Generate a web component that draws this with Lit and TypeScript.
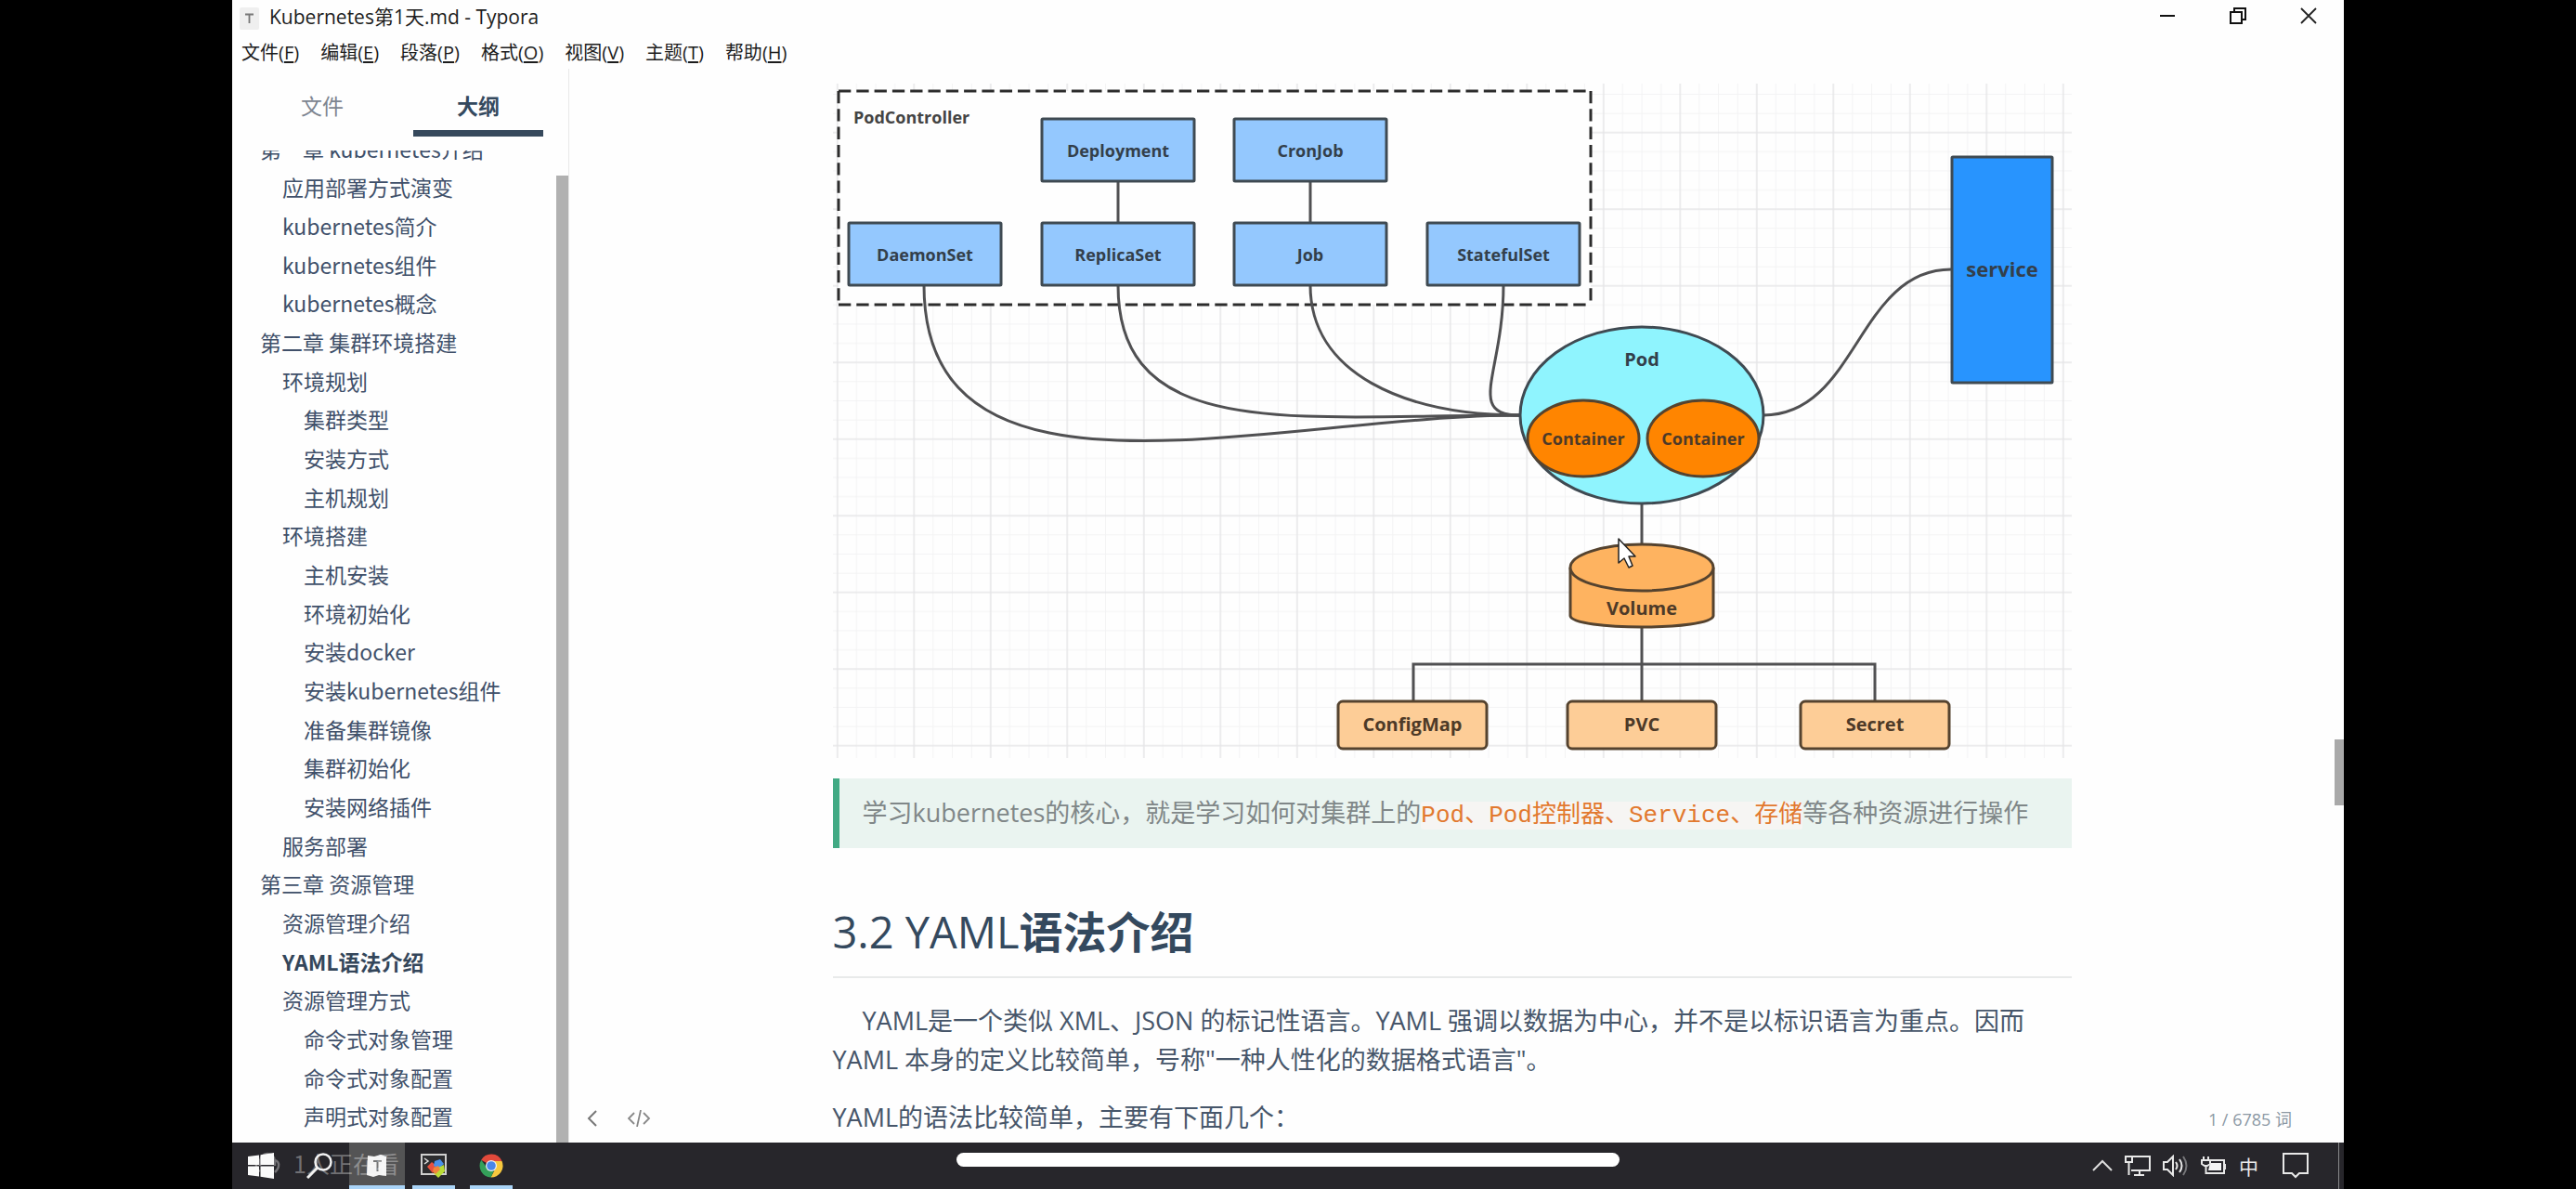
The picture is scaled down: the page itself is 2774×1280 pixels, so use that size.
import { LitElement, html, svg, css } from "lit";
import { customElement, state } from "lit/decorators.js";
import { classMap } from "lit/directives/class-map.js";

interface OutlineEntry {
  text: string;
  level: number;
}

interface Box {
  label: string;
  x: number;
  y: number;
}

const MENUS: [string, string][] = [
  ["文件", "F"],
  ["编辑", "E"],
  ["段落", "P"],
  ["格式", "O"],
  ["视图", "V"],
  ["主题", "T"],
  ["帮助", "H"],
];

const OUTLINE: OutlineEntry[] = [
  { text: "第一章 kubernetes介绍", level: 1 },
  { text: "应用部署方式演变", level: 2 },
  { text: "kubernetes简介", level: 2 },
  { text: "kubernetes组件", level: 2 },
  { text: "kubernetes概念", level: 2 },
  { text: "第二章 集群环境搭建", level: 1 },
  { text: "环境规划", level: 2 },
  { text: "集群类型", level: 3 },
  { text: "安装方式", level: 3 },
  { text: "主机规划", level: 3 },
  { text: "环境搭建", level: 2 },
  { text: "主机安装", level: 3 },
  { text: "环境初始化", level: 3 },
  { text: "安装docker", level: 3 },
  { text: "安装kubernetes组件", level: 3 },
  { text: "准备集群镜像", level: 3 },
  { text: "集群初始化", level: 3 },
  { text: "安装网络插件", level: 3 },
  { text: "服务部署", level: 2 },
  { text: "第三章 资源管理", level: 1 },
  { text: "资源管理介绍", level: 2 },
  { text: "YAML语法介绍", level: 2 },
  { text: "资源管理方式", level: 2 },
  { text: "命令式对象管理", level: 3 },
  { text: "命令式对象配置", level: 3 },
  { text: "声明式对象配置", level: 3 },
];

const CONTROLLERS: Box[] = [
  { label: "Deployment", x: 1122, y: 128 },
  { label: "CronJob", x: 1329, y: 128 },
  { label: "DaemonSet", x: 914, y: 240 },
  { label: "ReplicaSet", x: 1122, y: 240 },
  { label: "Job", x: 1329, y: 240 },
  { label: "StatefulSet", x: 1537, y: 240 },
];

const STORAGE: Box[] = [
  { label: "ConfigMap", x: 1441, y: 755 },
  { label: "PVC", x: 1688, y: 755 },
  { label: "Secret", x: 1939, y: 755 },
];

@customElement("title-bar")
class TitleBar extends LitElement {
  static styles = css`
    :host {
      display: block;
      font-family: "Open Sans", "Noto Sans CJK SC", sans-serif;
      color: #1c1c1c;
    }
    .title {
      display: flex;
      align-items: center;
      height: 40px;
      padding-left: 8px;
      gap: 11px;
      font-size: 21px;
    }
    .logo {
      width: 21px;
      height: 24px;
    }
    .name {
      flex: 1;
      line-height: 36px;
      padding-bottom: 4px;
    }
    .controls {
      align-self: flex-start;
      display: flex;
      height: 34px;
    }
    .control {
      width: 76px;
      padding: 0;
      border: 0;
      background: none;
      display: grid;
      place-items: center;
    }
    .menu {
      display: flex;
      gap: 23px;
      height: 34px;
      padding-left: 10px;
    }
    .menu-item {
      font: inherit;
      font-size: 20px;
      line-height: 34px;
      padding: 0;
      border: 0;
      background: none;
      color: inherit;
    }
    .key {
      text-underline-offset: 2px;
    }
  `;

  render() {
    return html`
      <div class="title">
        <svg class="logo" viewBox="0 0 21 24" aria-hidden="true">
          <rect width="21" height="24" rx="2" fill="#efefef" />
          <path d="M6 7.500h9M10.500 7.500V17" stroke="#777" stroke-width="1.800" fill="none" />
        </svg>
        <span class="name">Kubernetes第1天.md - Typora</span>
        <div class="controls">
          <button class="control" aria-label="最小化">
            <svg width="18" height="18" viewBox="0 0 18 18"><path d="M1 9h16" stroke="#111" stroke-width="2" /></svg>
          </button>
          <button class="control" aria-label="还原">
            <svg width="18" height="18" viewBox="0 0 18 18" fill="none" stroke="#111" stroke-width="2">
              <path d="M1 5h12v12H1zM5 5V1h12v12h-4" />
            </svg>
          </button>
          <button class="control" aria-label="关闭">
            <svg width="18" height="18" viewBox="0 0 18 18"><path d="M1 1l16 16M17 1L1 17" stroke="#222" stroke-width="1.800" /></svg>
          </button>
        </div>
      </div>
      <nav class="menu">
        ${MENUS.map(([name, key]) => html`<button class="menu-item">${name}(<u class="key">${key}</u>)</button>`)}
      </nav>
    `;
  }
}

@customElement("outline-panel")
class OutlinePanel extends LitElement {
  @state() private current = "YAML语法介绍";

  static styles = css`
    :host {
      display: flex;
      flex-direction: column;
      box-sizing: border-box;
      min-height: 0;
      border-right: 1px solid #e8e8e8;
      font-family: "Noto Sans CJK SC", sans-serif;
      color: #40506a;
    }
    .tabs {
      display: grid;
      grid-template-columns: 1fr 1fr;
      gap: 28px;
      padding: 0 27px;
      margin-bottom: 15px;
    }
    .tab {
      height: 73px;
      padding: 12px 0 0;
      border: 0;
      border-bottom: 7px solid transparent;
      background: none;
      font: inherit;
      font-size: 23px;
      line-height: 42px;
      color: #7d8590;
    }
    .tab.active {
      border-color: #36495c;
      color: #34495e;
      font-weight: 700;
    }
    .body {
      flex: 1;
      min-height: 0;
      display: flex;
      overflow: hidden;
    }
    .list {
      flex: 1;
      margin: -23px 0 0;
      padding: 0 0 8px;
      list-style: none;
      display: grid;
      grid-auto-rows: 1fr;
      font-size: 23px;
    }
    .row {
      display: flex;
      align-items: center;
      min-height: 0;
      line-height: 32px;
    }
    .level-1 {
      padding-left: 30px;
    }
    .level-2 {
      padding-left: 54px;
    }
    .level-3 {
      padding-left: 77px;
    }
    .link {
      color: inherit;
      text-decoration: none;
      white-space: nowrap;
    }
    .link.current {
      font-weight: 700;
      color: #34465a;
    }
    .track {
      width: 13px;
      padding-top: 27px;
      display: flex;
    }
    .thumb {
      flex: 1;
      background: #b1b1b1;
    }
  `;

  render() {
    return html`
      <div class="tabs" role="tablist">
        <button class="tab" role="tab">文件</button>
        <button class="tab active" role="tab" aria-selected="true">大纲</button>
      </div>
      <div class="body">
        <ul class="list">
          ${OUTLINE.map(
            (e) => html`<li class="row level-${e.level}">
              <a
                class=${classMap({ link: true, current: e.text === this.current })}
                href="#outline"
                @click=${() => (this.current = e.text)}
                >${e.text}</a
              >
            </li>`
          )}
        </ul>
        <div class="track"><div class="thumb"></div></div>
      </div>
    `;
  }
}

@customElement("pod-diagram")
class PodDiagram extends LitElement {
  static styles = css`
    :host {
      display: block;
    }
    .canvas {
      display: block;
      width: 100%;
      height: auto;
      font-family: "Open Sans", sans-serif;
      font-weight: 700;
      font-size: 18px;
    }
    .label {
      fill: #333f4b;
      text-anchor: middle;
    }
    .warm {
      fill: #4d3a28;
    }
    .large {
      font-size: 22px;
    }
    .medium {
      font-size: 20px;
    }
    .start {
      text-anchor: start;
      fill: #444;
    }
    .wire {
      fill: none;
      stroke: #505052;
      stroke-width: 3;
    }
    .shape {
      stroke: #3f4a52;
      stroke-width: 3;
    }
    .brown {
      stroke: #55432f;
    }
    .minor {
      fill: none;
      stroke: #f3f3f4;
      stroke-width: 1;
    }
    .major {
      fill: none;
      stroke: #e6e6e8;
      stroke-width: 1.500;
    }
  `;

  render() {
    return html`
      <svg class="canvas" viewBox="897 85 1334 733" role="img" aria-label="Kubernetes 资源关系图">
        <defs>
          <pattern id="grid" x="901.800" y="142.700" width="82.500" height="82.500" patternUnits="userSpaceOnUse">
            <path class="minor" d="M20.600 0V82.500M41.200 0V82.500M61.900 0V82.500M0 20.600H82.500M0 41.200H82.500M0 61.900H82.500" />
            <path class="major" d="M0 0H82.500M0 0V82.500M82.500 0V82.500M0 82.500H82.500" />
          </pattern>
        </defs>
        <rect x="897" y="90" width="1334" height="726" fill="url(#grid)" />
        <rect x="903" y="98" width="810" height="230" fill="#fefefe" />
        <path
          d="M903 98H1713M903 328H1713M903 98V328M1713 98V328"
          fill="none"
          stroke="#2c2c2c"
          stroke-width="3"
          stroke-dasharray="13.300 6"
        />
        <text class="label start" x="919" y="133">PodController</text>

        <path class="wire" d="M1204 195V240M1411 195V240M1768 541V586" />
        <path class="wire" d="M995 307C995 567 1369 447 1638 447" />
        <path class="wire" d="M1204 307C1204 477 1394 447 1638 447" />
        <path class="wire" d="M1411 307C1411 402 1512 447 1638 447" />
        <path class="wire" d="M1619 307C1619 403 1577 447 1638 447" />
        <path class="wire" d="M1899 447C2000 447 2000 290 2101 290" />
        <path class="wire" d="M1768 675V755M1522 755V715H2019V755" />

        ${CONTROLLERS.map(
          (b) => svg`
            <rect class="shape" x=${b.x} y=${b.y} width="164" height="67" rx="1" fill="#94c8fe" />
            <text class="label" x=${b.x + 82} y=${b.y + 41}>${b.label}</text>`
        )}

        <ellipse class="shape" cx="1768" cy="447" rx="131" ry="95" fill="#8ff4fe" />
        <text class="label medium" x="1768" y="394">Pod</text>
        ${[1705, 1834].map(
          (cx) => svg`
            <ellipse class="shape brown" cx=${cx} cy="472" rx="60" ry="41" fill="#ff8500" />
            <text class="label warm" x=${cx} y="479">Container</text>`
        )}

        <rect class="shape" x="2102" y="169" width="108" height="243" rx="1" fill="#2894fe" />
        <text class="label large" x="2156" y="298">service</text>

        <path class="shape brown" d="M1691 611V663C1694 679 1842 679 1845 663V611" fill="#feb360" />
        <ellipse class="shape brown" cx="1768" cy="611" rx="77" ry="25" fill="#feb360" />
        <text class="label warm medium" x="1768" y="662">Volume</text>

        ${STORAGE.map(
          (b) => svg`
            <rect class="shape brown" x=${b.x} y=${b.y} width="160" height="51" rx="5" fill="#fdcd97" />
            <text class="label warm medium" x=${b.x + 80} y=${b.y + 32}>${b.label}</text>`
        )}

        <path
          d="M1743 580V606L1749 601L1754 611L1758 609L1754 599H1761Z"
          fill="#fff"
          stroke="#222"
          stroke-width="1.500"
          stroke-linejoin="round"
        />
      </svg>
    `;
  }
}

@customElement("document-view")
class DocumentView extends LitElement {
  static styles = css`
    :host {
      display: flex;
      position: relative;
      min-width: 0;
      min-height: 0;
      overflow: hidden;
      font-family: "Open Sans", "Noto Sans CJK SC", sans-serif;
      font-size: 27px;
      line-height: 42px;
      color: #47566a;
    }
    .scroller {
      flex: 1;
      min-width: 0;
      overflow: hidden;
      padding: 11px 24px 0;
    }
    .page {
      max-width: 1334px;
      margin: 0 auto;
    }
    .quote {
      box-sizing: border-box;
      margin: 20px 0 0;
      padding: 16px 25px 17px;
      border-left: 7px solid #42aa84;
      background: #eaf4f0;
      color: #808788;
    }
    .code {
      font-family: "Liberation Mono", "Noto Sans CJK SC", monospace;
      font-size: 26px;
      line-height: 32px;
      border-radius: 3px;
      background: #f6f5f3;
      color: #e2792f;
    }
    .heading {
      margin: 56px 0 25px;
      padding-bottom: 14px;
      border-bottom: 2px solid #e8eaea;
      font-size: 47px;
      line-height: 68px;
      font-weight: 700;
      color: #34495e;
    }
    .latin {
      font-weight: 500;
    }
    .para {
      margin: 0 0 20px;
    }
    .indent {
      text-indent: 32px;
    }
    .rail {
      width: 10px;
      display: flex;
      flex-direction: column;
    }
    .spacer-top {
      flex: 721;
    }
    .thumb {
      flex: 71;
      background: #a9a9a9;
    }
    .spacer-bottom {
      flex: 363;
    }
    .tools {
      position: absolute;
      left: 18px;
      bottom: 12px;
      display: flex;
      gap: 30px;
    }
    .tool {
      padding: 0;
      border: 0;
      background: none;
      display: grid;
      place-items: center;
      height: 28px;
    }
    .count {
      position: absolute;
      right: 56px;
      bottom: 11px;
      font-size: 18px;
      line-height: 28px;
      color: #8b98a4;
    }
  `;

  render() {
    return html`
      <div class="scroller">
        <article class="page">
          <pod-diagram></pod-diagram>
          <blockquote class="quote">
            学习kubernetes的核心，就是学习如何对集群上的<code class="code">Pod、Pod控制器、Service、存储</code
            >等各种资源进行操作
          </blockquote>
          <h2 class="heading"><span class="latin">3.2 YAML</span>语法介绍</h2>
          <p class="para indent">
            YAML是一个类似 XML、JSON 的标记性语言。YAML 强调以数据为中心，并不是以标识语言为重点。因而<br />YAML
            本身的定义比较简单，号称"一种人性化的数据格式语言"。
          </p>
          <p class="para">YAML的语法比较简单，主要有下面几个：</p>
        </article>
      </div>
      <div class="rail">
        <div class="spacer-top"></div>
        <div class="thumb"></div>
        <div class="spacer-bottom"></div>
      </div>
      <div class="tools">
        <button class="tool" aria-label="隐藏侧边栏">
          <svg width="14" height="18" viewBox="0 0 14 18"><path d="M11 1L3 9l8 8" fill="none" stroke="#777" stroke-width="2" /></svg>
        </button>
        <button class="tool" aria-label="源代码模式">
          <svg width="26" height="18" viewBox="0 0 26 18">
            <path d="M8 3L2 9l6 6M18 3l6 6-6 6M15 0l-4 18" fill="none" stroke="#888" stroke-width="1.800" />
          </svg>
        </button>
      </div>
      <div class="count">1 / 6785 词</div>
    `;
  }
}

@customElement("task-bar")
class TaskBar extends LitElement {
  static styles = css`
    :host {
      display: flex;
      position: relative;
      height: 50px;
      background: #27262b;
      font-family: "Open Sans", "Noto Sans CJK SC", sans-serif;
    }
    .apps {
      flex: 1;
      display: flex;
    }
    .app {
      box-sizing: border-box;
      height: 50px;
      padding: 0;
      border: 0;
      background: none;
      display: grid;
      place-items: center;
      width: 60px;
    }
    .start {
      width: 61px;
    }
    .search {
      width: 65px;
    }
    .running {
      width: 46px;
      margin-left: 8px;
      border-bottom: 4px solid #a9d3f7;
      padding-top: 4px;
    }
    .running.chrome {
      margin-left: 16px;
    }
    .open {
      background: #545455;
      border-bottom: 4px solid #a9d3f7;
      padding-top: 4px;
    }
    .watermark {
      position: absolute;
      left: 24px;
      top: 6px;
      display: flex;
      align-items: center;
      gap: 14px;
      font-family: "Noto Sans CJK SC", sans-serif;
      font-size: 25px;
      line-height: 32px;
      color: rgba(255, 255, 255, 0.35);
      pointer-events: none;
    }
    .tray {
      display: flex;
      align-items: center;
      gap: 13px;
      padding-right: 5px;
    }
    .tray-item {
      padding: 0;
      border: 0;
      background: none;
      color: #ececec;
      display: grid;
      place-items: center;
      height: 50px;
      font: inherit;
      font-size: 21px;
    }
    .notice {
      margin: 0 19px 0 13px;
    }
    .peek {
      width: 1px;
      height: 50px;
      background: #8b8b8d;
    }
  `;

  render() {
    return html`
      <div class="apps">
        <button class="app start" aria-label="开始">
          <svg width="28" height="28" viewBox="0 0 28 28" fill="#fafafa">
            <path d="M0 4L12 2.400V13H0zM13.500 2.200L28 0V13H13.500zM0 14.500H12V25.600L0 24zM13.500 14.500H28V28L13.500 25.800z" />
          </svg>
        </button>
        <button class="app search" aria-label="搜索">
          <svg width="28" height="28" viewBox="0 0 28 28" fill="none" stroke="#f2f2f2" stroke-width="2.500">
            <circle cx="18" cy="10" r="8.500" />
            <path d="M12 16L1 27" stroke-width="3" />
          </svg>
        </button>
        <button class="app open" aria-label="Typora">
          <svg width="24" height="26" viewBox="0 0 24 26">
            <path d="M2 2l7 1 7-2 6 2v21l-8-1-6 2-7-2z" fill="#f4f4f4" />
            <path d="M8 8h9M12.500 8v11" stroke="#777" stroke-width="2" fill="none" />
          </svg>
        </button>
        <button class="app running" aria-label="终端">
          <svg width="28" height="28" viewBox="0 0 28 28">
            <rect x="1" y="2" width="26" height="21" fill="#2d2d30" stroke="#cfcfcf" stroke-width="2" />
            <path d="M4 6l4 3-4 3" fill="none" stroke="#ddd" stroke-width="1.500" />
            <path d="M7 15l5-5 6 5-5 7z" fill="#e8503e" />
            <path d="M15 9l6-2 4 5-5 5-6-3z" fill="#4a90e8" />
            <path d="M19 16l6-3 1 7-7 7-5-5z" fill="#b9dc36" />
            <path d="M14 16l5-2 2 4-5 5-3-3z" fill="#f0843c" />
          </svg>
        </button>
        <button class="app running chrome" aria-label="Chrome">
          <svg width="26" height="26" viewBox="0 0 26 26">
            <path d="M13 13L2.200 6.800A12.500 12.500 0 0 1 24.500 8H13z" fill="#e2493b" />
            <path d="M13 8H24.500A12.500 12.500 0 0 1 12.500 25.500L18 15z" fill="#f7c83e" />
            <path d="M2.200 6.800L9 16l4 2 3 0-3.500 7.500A12.500 12.500 0 0 1 2.200 6.800z" fill="#34a05a" />
            <circle cx="13" cy="13" r="6" fill="#f3f3f3" />
            <circle cx="13" cy="13" r="4.800" fill="#4a86ea" />
          </svg>
        </button>
      </div>
      <div class="watermark">
        <svg width="28" height="24" viewBox="0 0 28 24" fill="none" stroke="currentColor" stroke-width="2.500">
          <path d="M6 15V10a8 8 0 0 1 16 0v5M6 9a5 5 0 0 0-4 6c0 3 2 5 4 6M22 9a5 5 0 0 1 4 6c0 3-2 5-4 7" />
        </svg>
        <span>1人正在看</span>
      </div>
      <div class="tray">
        <button class="tray-item" aria-label="显示隐藏的图标">
          <svg width="22" height="14" viewBox="0 0 22 14"><path d="M1 12L11 2l10 10" fill="none" stroke="#ddd" stroke-width="2" /></svg>
        </button>
        <button class="tray-item" aria-label="网络">
          <svg width="28" height="24" viewBox="0 0 28 24" fill="none" stroke="#e8e8e8" stroke-width="2">
            <path d="M9 2h18v15H7M1 2h7v6H1zM4.500 8v14M16 17v5M10 22h11" />
          </svg>
        </button>
        <button class="tray-item" aria-label="音量">
          <svg width="28" height="24" viewBox="0 0 28 24" fill="none" stroke="#e8e8e8" stroke-width="2">
            <path d="M1 8h4l6-6v20l-6-6H1zM14 8q3 4 0 8M18 5q5 7 0 14" />
            <path d="M22 2q7 10 0 20" stroke="#77777a" />
          </svg>
        </button>
        <button class="tray-item" aria-label="电池">
          <svg width="28" height="22" viewBox="0 0 28 22" fill="none" stroke="#e8e8e8" stroke-width="2">
            <path d="M11 5h14v14H6M26 9v6" />
            <path d="M10 8h12v8H8z" fill="#f4f4f4" stroke="none" />
            <path d="M3 1v4M8 1v4M1 5h9v4l-3 2H4L1 9zM5.500 11v9" />
          </svg>
        </button>
        <button class="tray-item" aria-label="输入法">中</button>
        <button class="tray-item notice" aria-label="通知">
          <svg width="28" height="28" viewBox="0 0 28 28" fill="none" stroke="#e8e8e8" stroke-width="2">
            <path d="M1 1h26v21h-9l-4 4-4-4H1z" />
          </svg>
        </button>
        <div class="peek"></div>
      </div>
    `;
  }
}

@customElement("app-root")
class AppRoot extends LitElement {
  static styles = css`
    :host {
      display: flex;
      position: relative;
      height: 100vh;
      padding: 0 250px;
      box-sizing: border-box;
      background: #000;
      overflow: hidden;
    }
    .window {
      flex: 1;
      min-width: 0;
      display: flex;
      flex-direction: column;
      background: #fefefe;
    }
    .workspace {
      flex: 1;
      min-height: 0;
      display: grid;
      grid-template-columns: 363px 1fr;
      grid-template-rows: minmax(0, 1fr);
    }
    .home-indicator {
      position: absolute;
      left: 50%;
      bottom: 24px;
      width: 714px;
      height: 15px;
      margin-left: -357px;
      border-radius: 8px;
      background: #fff;
    }
  `;

  render() {
    return html`
      <main class="window">
        <title-bar></title-bar>
        <div class="workspace">
          <outline-panel></outline-panel>
          <document-view></document-view>
        </div>
        <task-bar></task-bar>
      </main>
      <div class="home-indicator"></div>
    `;
  }
}
